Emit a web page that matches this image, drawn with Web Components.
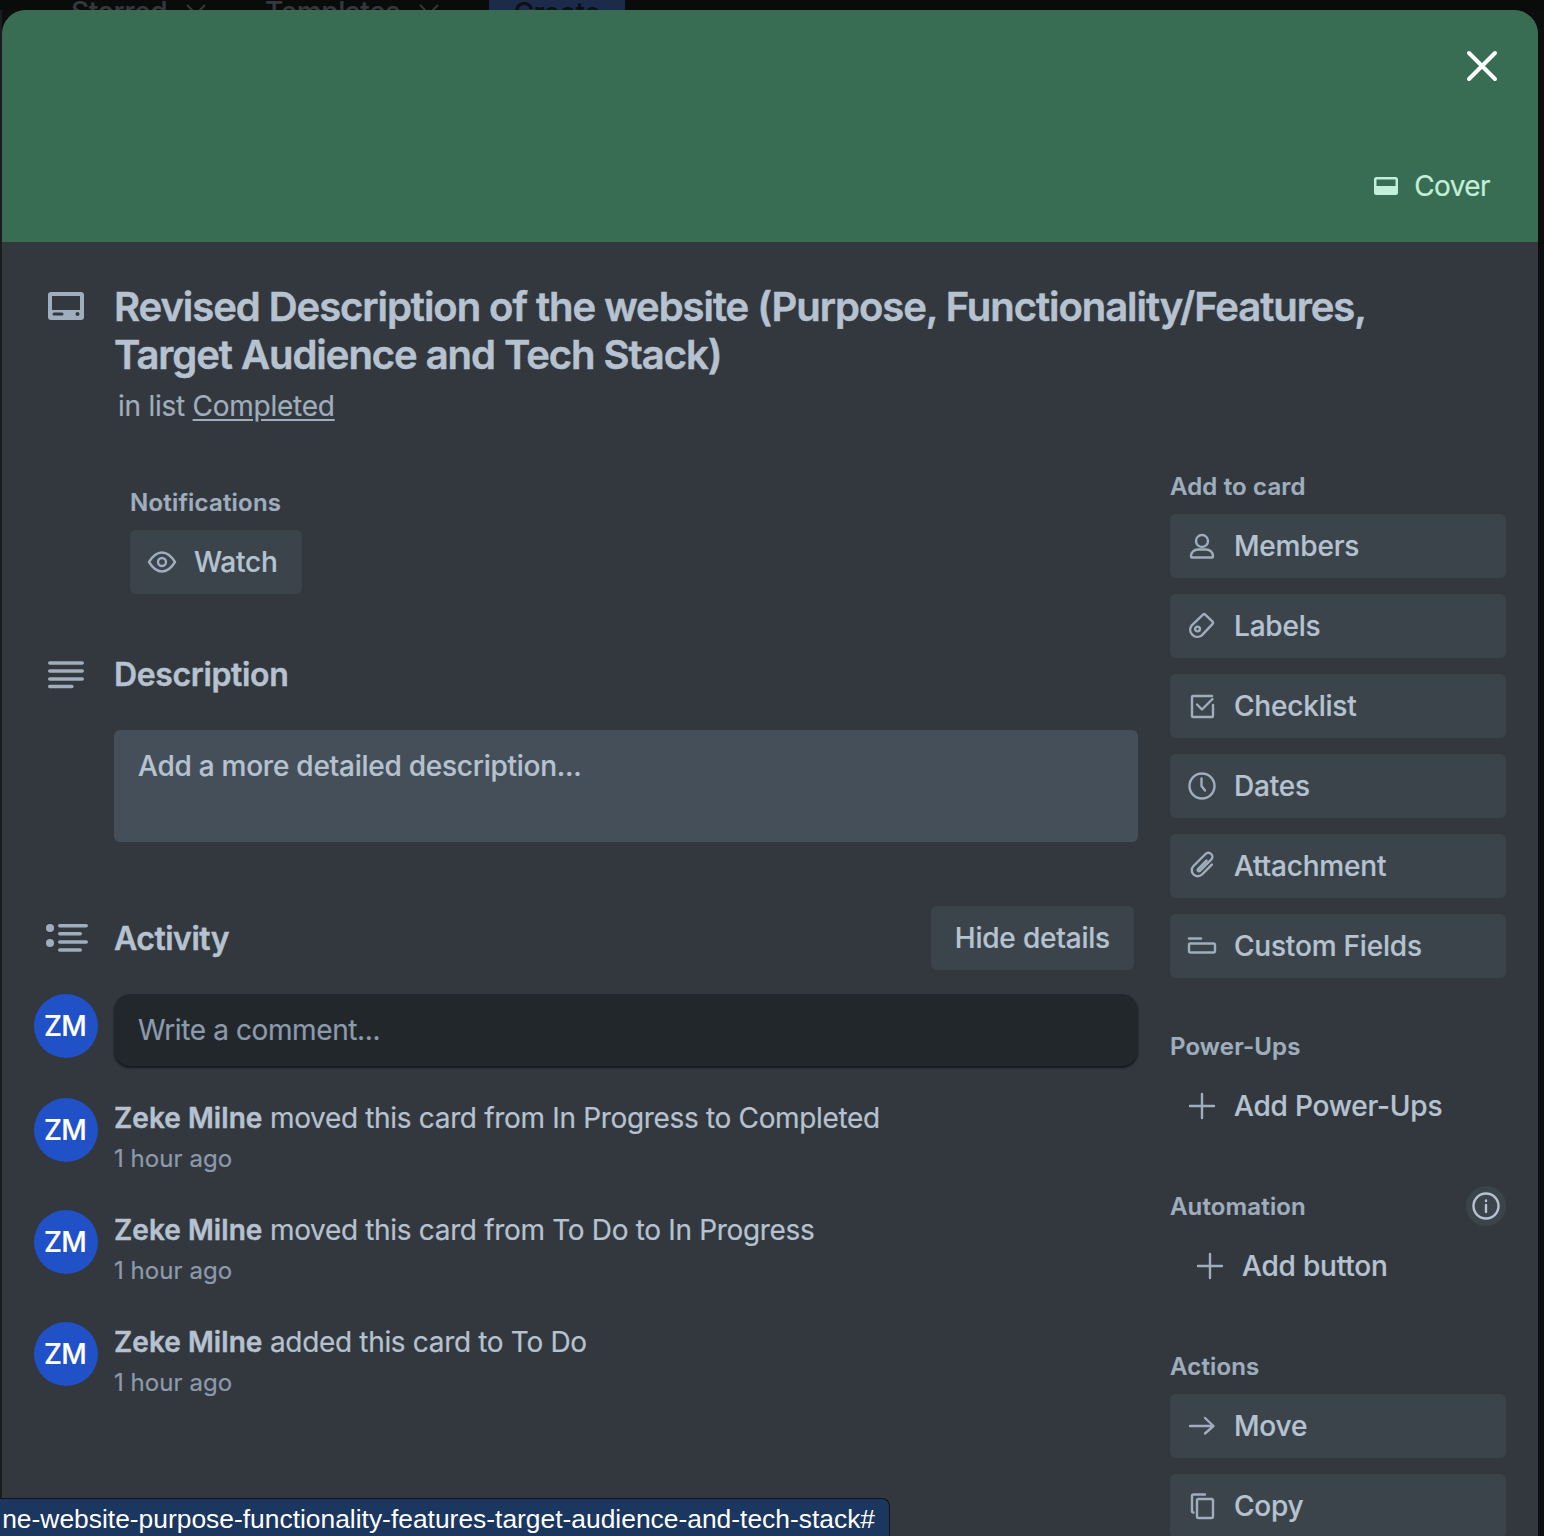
<!DOCTYPE html>
<html lang="en">
<head>
<meta charset="utf-8">
<title>Card</title>
<style>
    html, body { margin: 0; height: 1536px; overflow: hidden; background: #0c0d0d; }
    body { font-family: Inter, "Liberation Sans", sans-serif; color: #b6c2cf; -webkit-text-stroke: 0.2px; }
</style>
</head>
<body>
<board-page>
    <board-header></board-header>
    <card-modal>
        <card-cover></card-cover>
        <card-title slot="title" list="Completed">Revised Description of the website (Purpose, Functionality/Features, Target Audience and Tech Stack)</card-title>

        <div slot="main">
            <notify-block></notify-block>
            <description-block></description-block>
            <activity-block>
                <activity-item name="Zeke Milne" time="1 hour ago">moved this card from In Progress to Completed</activity-item>
                <activity-item name="Zeke Milne" time="1 hour ago">moved this card from To Do to In Progress</activity-item>
                <activity-item name="Zeke Milne" time="1 hour ago">added this card to To Do</activity-item>
            </activity-block>
        </div>

        <div slot="side">
            <side-group label="Add to card">
                <side-button icon="member">Members</side-button>
                <side-button icon="label">Labels</side-button>
                <side-button icon="check">Checklist</side-button>
                <side-button icon="clock">Dates</side-button>
                <side-button icon="clip">Attachment</side-button>
                <side-button icon="fields">Custom Fields</side-button>
            </side-group>
            <side-group label="Power-Ups">
                <side-button icon="plus" plain>Add Power-Ups</side-button>
            </side-group>
            <side-group label="Automation" info>
                <side-button icon="plus" plain indent>Add button</side-button>
            </side-group>
            <side-group label="Actions">
                <side-button icon="arrow">Move</side-button>
                <side-button icon="copy">Copy</side-button>
            </side-group>
        </div>
    </card-modal>
    <url-bubble>ne-website-purpose-functionality-features-target-audience-and-tech-stack#</url-bubble>
</board-page>

<script>
const ICONS = {
    member: '<circle cx="16" cy="11" r="6"/><path d="M5 26c0-3.500 3-6.500 7-6.500h8c4 0 7 3 7 6.500v.5a1 1 0 0 1-1 1H6a1 1 0 0 1-1-1z"/>',
    label: '<path d="M17 4.600a1.600 1.600 0 0 1 2.200 0l7.400 7a1.600 1.600 0 0 1 0 2.200L15.800 25.400a7.200 7.200 0 0 1-10.300-9.800z"/><circle cx="11.500" cy="19" r="2.400"/>',
    check: '<path d="M26 6H7a1 1 0 0 0-1 1v19a1 1 0 0 0 1 1h19a1 1 0 0 0 1-1V15"/><path d="M11 14.500l5 5 10.500-10.500"/>',
    clock: '<circle cx="16" cy="16" r="12.500"/><path d="M15.500 8.500V16l3.500 4.500"/>',
    clip: '<path transform="rotate(45 16 16)" d="M22 8v14a6 6 0 0 1-12 0V5a4 4 0 0 1 8 0v16a1.300 1.300 0 0 1-2.600 0V9"/>',
    fields: '<path d="M3 8.500h12"/><rect x="3" y="13.500" width="26" height="9" rx="1.500"/>',
    plus: '<path d="M16 4v24M4 16h24"/>',
    arrow: '<path d="M4 16h23M19 8l8.500 8-8.500 7.500"/>',
    copy: '<rect x="11" y="9" width="16" height="19" rx="1.500"/><path d="M7.500 22.500a1.500 1.500 0 0 1-1.500-1.500V6a1.500 1.500 0 0 1 1.500-1.500H19"/>',
    eye: '<path d="M3 16c4-6.500 8-9.500 13-9.500S25 9.500 29 16c-4 6.500-8 9.500-13 9.500S7 22.500 3 16z"/><circle cx="16" cy="16" r="4"/>',
    info: '<circle cx="16" cy="16" r="12.500"/><path d="M16 15v7"/><path d="M16 10.500v.5"/>'
}

function icon(name, color) {
    return `<svg width="32" height="32" viewBox="0 0 32 32" fill="none" stroke="${color || '#9fadbc'}" stroke-width="2.400" stroke-linecap="round" stroke-linejoin="round" aria-hidden="true">${ICONS[name]}</svg>`
}

class BoardPage extends HTMLElement {
    constructor() {
        super()
        this.attachShadow({ mode: 'open' })
        this.shadowRoot.innerHTML = `
            <style>
                :host {
                    display: block;
                    position: relative;
                    height: 1536px;
                    overflow: hidden;
                    background: linear-gradient(to right, #1b1c1d 2px, #0c0d0d 2px);
                }
            </style>
            <slot></slot>
        `
    }
}

class BoardHeader extends HTMLElement {
    constructor() {
        super()
        this.attachShadow({ mode: 'open' })
        this.shadowRoot.innerHTML = `
            <style>
                :host {
                    display: flex;
                    align-items: flex-start;
                    height: 10px;
                    overflow: hidden;
                    background: #0a0b0b;
                    color: #35383c;
                    font: 500 28px/26px Inter, "Liberation Sans", sans-serif;
                    letter-spacing: -0.4px;
                }
                span { flex: none; margin-top: -1px; }
                svg { flex: none; margin: 4px 0 0 18px; }
                .starred { margin-left: 71px; }
                .templates { margin-left: 58px; }
                .create {
                    flex: none;
                    margin-left: 49px;
                    width: 136px;
                    height: 20px;
                    background: #1c2b4a;
                    color: #0b1016;
                    text-align: center;
                }
            </style>
            <span class="starred">Starred</span>
            <svg width="22" height="12" viewBox="0 0 22 12" fill="none" stroke="#35383c" stroke-width="2"><path d="M2 1l9 9 9-9"/></svg>
            <span class="templates">Templates</span>
            <svg width="22" height="12" viewBox="0 0 22 12" fill="none" stroke="#35383c" stroke-width="2"><path d="M2 1l9 9 9-9"/></svg>
            <div class="create">Create</div>
        `
    }
}

class CardModal extends HTMLElement {
    constructor() {
        super()
        this.attachShadow({ mode: 'open' })
        this.shadowRoot.innerHTML = `
            <style>
                :host {
                    display: block;
                    width: 1536px;
                    margin-left: 2px;
                    background: #33383f;
                    border-radius: 24px 24px 0 0;
                    overflow: hidden;
                    padding-bottom: 40px;
                }
                .columns {
                    display: grid;
                    grid-template-columns: 1136px 336px;
                    column-gap: 32px;
                    margin-top: 44px;
                }
            </style>
            <slot></slot>
            <slot name="title"></slot>
            <div class="columns">
                <slot name="main"></slot>
                <slot name="side"></slot>
            </div>
        `
    }
}

class CardCover extends HTMLElement {
    constructor() {
        super()
        this.attachShadow({ mode: 'open' })
        this.shadowRoot.innerHTML = `
            <style>
                :host {
                    display: flex;
                    position: relative;
                    justify-content: flex-end;
                    align-items: flex-end;
                    height: 232px;
                    box-sizing: border-box;
                    padding: 0 48px 24px 0;
                    background: #396d53;
                }
                .close { position: absolute; top: 36px; right: 36px; display: block; }
                .btn {
                    display: flex;
                    align-items: center;
                    gap: 12px;
                    height: 64px;
                    color: #c1efd9;
                    font-size: 28px;
                    font-weight: 400;
                    letter-spacing: -0.6px;
                }
                .btn svg { flex: none; }
            </style>
            <svg class="close" width="40" height="40" viewBox="0 0 40 40" fill="none" stroke="#fff" stroke-width="4" stroke-linecap="round"><path d="M7 7l26 26M33 7L7 33"/></svg>
            <div class="btn">
                <svg width="32" height="32" viewBox="0 0 32 32"><path fill="#c1efd9" fill-rule="evenodd" d="M6.500 7h19A2.500 2.500 0 0 1 28 9.500v13a2.500 2.500 0 0 1-2.500 2.500h-19A2.500 2.500 0 0 1 4 22.500v-13A2.500 2.500 0 0 1 6.500 7zM6.500 9.500v6.500h19V9.500z"/></svg>
                Cover
            </div>
        `
    }
}

class CardTitle extends HTMLElement {
    constructor() {
        super()
        this.attachShadow({ mode: 'open' })
    }
    connectedCallback() {
        this.shadowRoot.innerHTML = `
            <style>
                :host { display: flex; padding-top: 41px; }
                .gutter { flex: none; width: 112px; padding: 9px 0 0 46px; box-sizing: border-box; }
                .gutter svg { display: block; }
                .txt { width: 1290px; }
                h1 {
                    margin: 0;
                    font-size: 40px;
                    line-height: 48px;
                    font-weight: 600;
                    letter-spacing: -1.05px;
                    color: #b6c2cf;
                    -webkit-text-stroke: 0.5px;
                }
                p {
                    margin: 7px 0 0 4px;
                    font-size: 28px;
                    line-height: 40px;
                    color: #9fadbc;
                    letter-spacing: -0.25px;
                }
                a { color: inherit; text-decoration: underline; text-underline-offset: 3px; }
            </style>
            <div class="gutter">
                <svg width="36" height="28" viewBox="0 0 36 28"><path fill="#9fadbc" fill-rule="evenodd" d="M3 0h30a3 3 0 0 1 3 3v22a3 3 0 0 1-3 3H3a3 3 0 0 1-3-3V3a3 3 0 0 1 3-3zM4 4v14h28V4zM6 20.500a1.500 1.500 0 0 0 0 3h8a1.500 1.500 0 0 0 0-3zM29.500 20a2 2 0 1 0 0 4 2 2 0 0 0 0-4z"/></svg>
            </div>
            <div class="txt">
                <h1><slot></slot></h1>
                <p>in list <a href="#">${this.getAttribute('list')}</a></p>
            </div>
        `
    }
}

class NotifyBlock extends HTMLElement {
    constructor() {
        super()
        this.attachShadow({ mode: 'open' })
        this.shadowRoot.innerHTML = `
            <style>
                :host { display: block; padding: 16px 0 0 128px; }
                h3 {
                    margin: 0 0 12px;
                    height: 32px;
                    font-size: 24px;
                    line-height: 34px;
                    font-weight: 600;
                    color: #9fadbc;
                    letter-spacing: 0.2px;
                }
                .btn {
                    display: inline-flex;
                    align-items: center;
                    gap: 16px;
                    height: 64px;
                    padding: 0 24px 0 16px;
                    background: #3b444b;
                    border-radius: 6px;
                    font-size: 28px;
                    font-weight: 500;
                    color: #b6c2cf;
                    vertical-align: top;
                    letter-spacing: -0.25px;
                }
            </style>
            <h3>Notifications</h3>
            <div class="btn">${icon('eye')}Watch</div>
        `
    }
}

class DescriptionBlock extends HTMLElement {
    constructor() {
        super()
        this.attachShadow({ mode: 'open' })
        this.shadowRoot.innerHTML = `
            <style>
                :host { display: block; padding-top: 61px; }
                .head { display: flex; align-items: center; height: 40px; }
                .gutter { flex: none; width: 112px; padding-left: 46px; box-sizing: border-box; }
                .gutter svg { display: block; }
                h2 { margin: 0; font-size: 32px; line-height: 40px; font-weight: 600; color: #b6c2cf; letter-spacing: -0.36px; -webkit-text-stroke: 0.4px; }
                .box {
                    margin: 35px 0 0 112px;
                    height: 112px;
                    box-sizing: border-box;
                    padding: 16px 24px;
                    background: #454f59;
                    border-radius: 6px;
                    font-size: 28px;
                    line-height: 40px;
                    font-weight: 500;
                    color: #b6c2cf;
                    letter-spacing: -0.25px;
                }
            </style>
            <div class="head">
                <div class="gutter">
                    <svg width="36" height="28" viewBox="0 0 36 28" fill="none" stroke="#9fadbc" stroke-width="3.600" stroke-linecap="round"><path d="M1.800 2h32.400M1.800 10h32.400M1.800 18h32.400M1.800 25.500h22"/></svg>
                </div>
                <h2>Description</h2>
            </div>
            <div class="box">Add a more detailed description...</div>
        `
    }
}

class UserAvatar extends HTMLElement {
    constructor() {
        super()
        this.attachShadow({ mode: 'open' })
        this.shadowRoot.innerHTML = `
            <style>
                :host {
                    display: flex;
                    flex: none;
                    align-items: center;
                    justify-content: center;
                    width: 64px;
                    height: 64px;
                    box-sizing: border-box;
                    padding-right: 2px;
                    border-radius: 50%;
                    background: #2051c6;
                    color: #fff;
                    font-size: 28px;
                    font-weight: 500;
                    letter-spacing: -0.8px;
                }
            </style>
            <slot></slot>
        `
    }
}

class ActivityBlock extends HTMLElement {
    constructor() {
        super()
        this.attachShadow({ mode: 'open' })
        this.shadowRoot.innerHTML = `
            <style>
                :host { display: block; padding-top: 64px; }
                .head { display: flex; align-items: center; height: 64px; padding-right: 4px; }
                .gutter { flex: none; width: 112px; padding-left: 44px; box-sizing: border-box; }
                .gutter svg { display: block; }
                h2 { flex: 1; margin: 0; padding-top: 2px; font-size: 32px; line-height: 40px; font-weight: 600; color: #b6c2cf; letter-spacing: -0.5px; -webkit-text-stroke: 0.4px; }
                .hide {
                    display: flex;
                    align-items: center;
                    height: 64px;
                    padding: 0 24px;
                    background: #3b444b;
                    border-radius: 6px;
                    font-size: 28px;
                    font-weight: 500;
                    color: #b6c2cf;
                    letter-spacing: -0.2px;
                }
                .comment { display: flex; align-items: flex-start; gap: 16px; margin: 24px 0 32px 32px; }
                .input {
                    flex: 1;
                    height: 72px;
                    box-sizing: border-box;
                    padding: 0 24px;
                    display: flex;
                    align-items: center;
                    background: #22272b;
                    border-radius: 16px;
                    box-shadow: 0 2px 2px #16191d;
                    font-size: 28px;
                    color: #8c9bab;
                    letter-spacing: -0.39px;
                }
                .list { display: grid; row-gap: 32px; }
            </style>
            <div class="head">
                <div class="gutter">
                    <svg width="42" height="30" viewBox="0 0 42 30" fill="none" stroke="#9fadbc" stroke-width="3.600" stroke-linecap="round"><path d="M13.800 2.700h26.400M13.800 10.700h20.400M13.800 19h26.400M13.800 27h20.400"/><circle cx="4" cy="5" r="4" fill="#9fadbc" stroke="none"/><circle cx="4" cy="20" r="4" fill="#9fadbc" stroke="none"/></svg>
                </div>
                <h2>Activity</h2>
                <div class="hide">Hide details</div>
            </div>
            <div class="comment">
                <user-avatar>ZM</user-avatar>
                <div class="input">Write a comment...</div>
            </div>
            <div class="list"><slot></slot></div>
        `
    }
}

class ActivityItem extends HTMLElement {
    constructor() {
        super()
        this.attachShadow({ mode: 'open' })
    }
    connectedCallback() {
        this.shadowRoot.innerHTML = `
            <style>
                :host { display: flex; gap: 16px; margin-left: 32px; height: 80px; align-items: flex-start; }
                p { margin: 0; font-size: 28px; line-height: 40px; color: #b6c2cf; letter-spacing: -0.33px; }
                b { font-weight: 600; letter-spacing: 0.05px; -webkit-text-stroke: 0.4px; }
                small { display: block; height: 40px; font-size: 24px; line-height: 42px; color: #8c9bab; letter-spacing: 0.05px; }
            </style>
            <user-avatar>ZM</user-avatar>
            <div>
                <p><b>${this.getAttribute('name')}</b> <slot></slot></p>
                <small>${this.getAttribute('time')}</small>
            </div>
        `
    }
}

class SideGroup extends HTMLElement {
    constructor() {
        super()
        this.attachShadow({ mode: 'open' })
    }
    connectedCallback() {
        const info = this.hasAttribute('info')
            ? `<div class="info">${icon('info', '#b6c2cf')}</div>`
            : ''
        this.shadowRoot.innerHTML = `
            <style>
                :host { display: block; margin-bottom: 52px; }
                .head { display: flex; align-items: center; justify-content: space-between; height: 32px; margin-bottom: 12px; }
                h3 { margin: 0; height: 32px; font-size: 24px; line-height: 34px; font-weight: 600; color: #9fadbc; letter-spacing: 0.15px; }
                .info {
                    display: flex;
                    align-items: center;
                    justify-content: center;
                    width: 40px;
                    height: 40px;
                    border-radius: 50%;
                    background: #3b444b;
                }
                .list { display: grid; row-gap: 16px; }
            </style>
            <div class="head">
                <h3>${this.getAttribute('label')}</h3>
                ${info}
            </div>
            <div class="list"><slot></slot></div>
        `
    }
}

class SideButton extends HTMLElement {
    constructor() {
        super()
        this.attachShadow({ mode: 'open' })
    }
    connectedCallback() {
        const plain = this.hasAttribute('plain')
        const indent = this.hasAttribute('indent')
        this.shadowRoot.innerHTML = `
            <style>
                :host {
                    display: flex;
                    align-items: center;
                    gap: 16px;
                    height: 64px;
                    box-sizing: border-box;
                    padding-left: ${indent ? 24 : 16}px;
                    background: ${plain ? 'transparent' : '#3b444b'};
                    border-radius: 6px;
                    font-size: 28px;
                    font-weight: 500;
                    color: #b6c2cf;
                    letter-spacing: -0.2px;
                }
                svg { flex: none; display: block; }
            </style>
            ${icon(this.getAttribute('icon'))}
            <slot></slot>
        `
    }
}

class UrlBubble extends HTMLElement {
    constructor() {
        super()
        this.attachShadow({ mode: 'open' })
        this.shadowRoot.innerHTML = `
            <style>
                :host {
                    position: absolute;
                    left: 0;
                    bottom: 0;
                    width: 890px;
                    height: 38px;
                    box-sizing: border-box;
                    padding: 4px 14px 0 0;
                    display: flex;
                    align-items: center;
                    justify-content: flex-end;
                    overflow: hidden;
                    white-space: nowrap;
                    background: #1b365f;
                    border: 1px solid #0f1318;
                    border-width: 1px 1px 0 0;
                    border-radius: 0 8px 0 0;
                    color: #fff;
                    font-family: "Liberation Sans", sans-serif;
                    font-size: 26.400px;
                    font-weight: 400;
                    -webkit-text-stroke: 0;
                }
            </style>
            <slot></slot>
        `
    }
}

customElements.define('board-page', BoardPage)
customElements.define('board-header', BoardHeader)
customElements.define('card-modal', CardModal)
customElements.define('card-cover', CardCover)
customElements.define('card-title', CardTitle)
customElements.define('notify-block', NotifyBlock)
customElements.define('description-block', DescriptionBlock)
customElements.define('user-avatar', UserAvatar)
customElements.define('activity-block', ActivityBlock)
customElements.define('activity-item', ActivityItem)
customElements.define('side-group', SideGroup)
customElements.define('side-button', SideButton)
customElements.define('url-bubble', UrlBubble)
</script>
</body>
</html>
